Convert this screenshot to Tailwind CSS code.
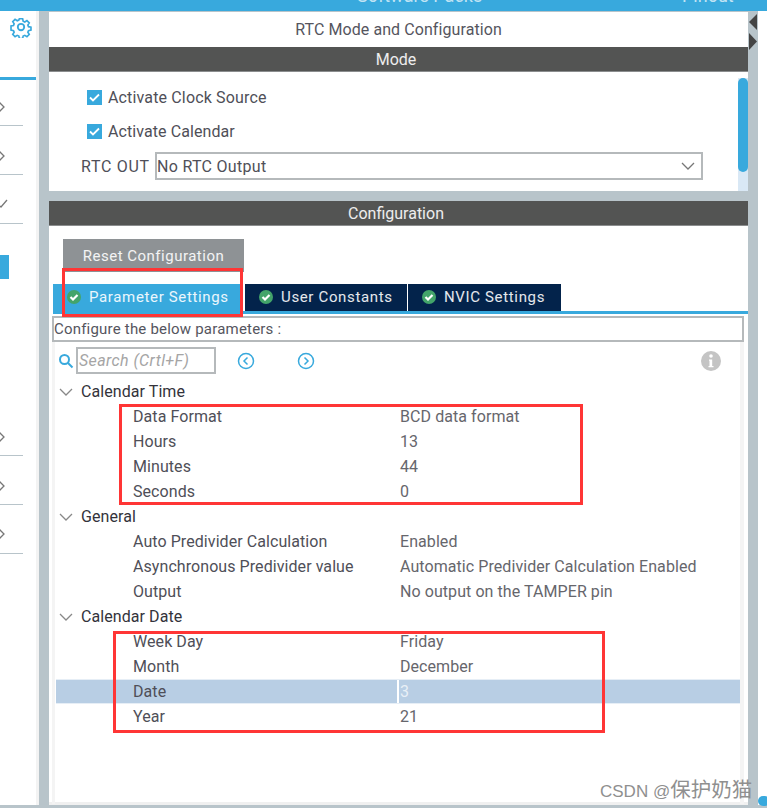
<!DOCTYPE html>
<html lang="en">
<head>
<meta charset="UTF-8" />
<title>RTC Mode and Configuration</title>
<script src="https://cdn.jsdelivr.net/npm/@tailwindcss/browser@4"></script>
</head>
<body class="bg-white">
<div class="relative w-[767px] h-[810px] overflow-hidden bg-white font-['Roboto','Liberation_Sans',sans-serif] text-[16px] leading-[25px] text-[#4f4f58]">

  <!-- top bar, labels cut off by the crop -->
  <div class="relative h-[11px] bg-[#38a9dd] overflow-hidden">
    <div class="flex text-white/70 text-[18px] leading-[18px] -mt-[13px] pl-[357px]">
      <span class="w-[325px]">Software Packs</span>
      <span>Pinout</span>
    </div>
  </div>

  <div class="flex h-[794px] border-b-[3px] border-[#b8c4ca] box-content">
    <!-- left sidebar -->
    <div class="w-[39px] h-[794px] border-r-[3px] border-[#f3f3f3] shrink-0">
      <div class="h-[69px] pt-[5px] flex justify-end pr-[4px] border-b-[3px] border-[#38a9dd]">
        <svg class="w-[22px] h-[22px]" viewBox="0 0 24 24" fill="none" stroke="#38a9dd" stroke-width="2">
          <circle cx="12" cy="12" r="3.5"/>
          <path d="M10 2h4l.6 3 2 .9 2.6-1.7 2.8 2.8-1.7 2.6.8 2 3 .6v3.6l-3 .6-.8 2 1.7 2.6-2.8 2.8-2.6-1.7-2 .9-.6 3h-4l-.6-3-2-.9-2.6 1.7-2.8-2.8 1.7-2.6-.8-2-3-.6V10.800l3-.6.8-2-1.700-2.600 2.800-2.800 2.600 1.700 2-.9z" transform="translate(1.200 1.200) scale(.9)"/>
        </svg>
      </div>
      <div class="w-[23px]">
        <div class="h-[46px] border-b border-[#b8c4ca] pt-[21px]"><svg class="w-[6px] h-[12px] -ml-[1px]" viewBox="0 0 6 12" fill="none" stroke="#777" stroke-width="1.300"><path d="M0 1l5 5-5 5"/></svg></div>
        <div class="h-[49px] border-b border-[#b8c4ca] pt-[24px]"><svg class="w-[6px] h-[12px] -ml-[1px]" viewBox="0 0 6 12" fill="none" stroke="#777" stroke-width="1.300"><path d="M0 1l5 5-5 5"/></svg></div>
        <div class="h-[49px] border-b border-[#b8c4ca] pt-[23px]"><svg class="w-[8px] h-[10px]" viewBox="0 0 8 10" fill="none" stroke="#777" stroke-width="1.300"><path d="M0 8l1 1 6-7"/></svg></div>
      </div>
      <div class="w-[9px] h-[24px] mt-[31px] bg-[#38a9dd]"></div>
      <div class="w-[23px] mt-[131px]">
        <div class="h-[46px] border-b border-[#b8c4ca] pt-[21px]"><svg class="w-[6px] h-[12px] -ml-[1px]" viewBox="0 0 6 12" fill="none" stroke="#777" stroke-width="1.300"><path d="M0 1l5 5-5 5"/></svg></div>
        <div class="h-[49px] border-b border-[#b8c4ca] pt-[24px]"><svg class="w-[6px] h-[12px] -ml-[1px]" viewBox="0 0 6 12" fill="none" stroke="#777" stroke-width="1.300"><path d="M0 1l5 5-5 5"/></svg></div>
        <div class="h-[49px] border-b border-[#b8c4ca] pt-[23px]"><svg class="w-[6px] h-[12px] -ml-[1px]" viewBox="0 0 6 12" fill="none" stroke="#777" stroke-width="1.300"><path d="M0 1l5 5-5 5"/></svg></div>
      </div>
    </div>

    <!-- splitter + panels -->
    <div class="w-[719px] bg-[#b8c4ca] pl-[10px] pr-[10px] pt-[1px] relative shrink-0">

      <!-- mode panel -->
      <div class="w-[699px] h-[179px] bg-white flex flex-col">
        <div class="h-[35px] text-center leading-[36px] tracking-[0.08px] text-[#55555e]">RTC Mode and Configuration</div>
        <div class="h-[25px] bg-[#535453] border-b border-[#8b8d8e] text-white/90 text-center leading-[25px] pr-[5px]">Mode</div>
        <div class="relative flex-1">
          <div class="absolute right-0 top-[6px] bottom-0 w-[10px] bg-[#d9e8f5]">
            <div class="h-[94px] bg-[#38a9dd] rounded-full"></div>
          </div>
          <label class="flex items-center h-[25px] mt-[13px] pl-[38px] gap-[6px] tracking-[0.15px]">
            <span class="w-[15px] h-[15px] bg-[#38a9dd] flex items-center justify-center"><svg class="w-[11px] h-[11px]" viewBox="0 0 11 11" fill="none" stroke="#fff" stroke-width="1.800"><path d="M1 5.500l3 3 6-6"/></svg></span>
            <span>Activate Clock Source</span>
          </label>
          <label class="flex items-center h-[25px] mt-[9px] pl-[38px] gap-[6px] tracking-[0.08px]">
            <span class="w-[15px] h-[15px] bg-[#38a9dd] flex items-center justify-center"><svg class="w-[11px] h-[11px]" viewBox="0 0 11 11" fill="none" stroke="#fff" stroke-width="1.800"><path d="M1 5.500l3 3 6-6"/></svg></span>
            <span>Activate Calendar</span>
          </label>
          <div class="flex items-center mt-[8px] pl-[32px]">
            <span class="w-[74px] tracking-[0.7px]">RTC OUT</span>
            <div class="w-[548px] h-[28px] border-2 border-[#b5b9bb] flex items-center justify-between pr-[6px]">
              <span class="tracking-[0.3px]">No RTC Output</span>
              <svg class="w-[14px] h-[8px]" viewBox="0 0 14 8" fill="none" stroke="#777" stroke-width="1.300"><path d="M1 1l6 6 6-6"/></svg>
            </div>
          </div>
        </div>
      </div>

      <!-- configuration panel -->
      <div class="w-[699px] h-[604px] mt-[10px] bg-white border-b-[3px] border-[#f0f0f0]">
        <div class="h-[25px] bg-[#535453] border-b border-[#8b8d8e] text-white/90 text-center leading-[25px] pr-[5px]">Configuration</div>
        <div class="ml-[14px] mt-[13px] w-[181px] h-[33px] bg-[#8e9295] text-white/90 text-center text-[15px] leading-[34px] tracking-[0.5px]">Reset Configuration</div>

        <!-- tabs -->
        <div class="flex mt-[12px] ml-[4px] h-[30px] items-start border-b-[3px] border-[#38a9dd] text-white/90 text-[15px] tracking-[0.65px]">
          <div class="w-[190px] h-[27px] bg-[#38a9dd] flex items-center pl-[14px] gap-[8px]">
            <svg class="w-[14px] h-[14px] -mt-[2px]" viewBox="0 0 14 14"><circle cx="7" cy="7" r="7" fill="#43a46a"/><path d="M3.500 7l2.500 2.500 4.500-4.600" fill="none" stroke="#fff" stroke-width="2.200"/></svg>
            <span>Parameter Settings</span>
          </div>
          <div class="w-[162px] h-[27px] ml-[2px] bg-[#03234b] flex items-center pl-[14px] gap-[8px]">
            <svg class="w-[14px] h-[14px] -mt-[2px]" viewBox="0 0 14 14"><circle cx="7" cy="7" r="7" fill="#43a46a"/><path d="M3.500 7l2.500 2.500 4.500-4.600" fill="none" stroke="#fff" stroke-width="2.200"/></svg>
            <span>User Constants</span>
          </div>
          <div class="w-[153px] h-[27px] ml-[1px] bg-[#03234b] flex items-center pl-[14px] gap-[8px]">
            <svg class="w-[14px] h-[14px] -mt-[2px]" viewBox="0 0 14 14"><circle cx="7" cy="7" r="7" fill="#43a46a"/><path d="M3.500 7l2.500 2.500 4.500-4.600" fill="none" stroke="#fff" stroke-width="2.200"/></svg>
            <span>NVIC Settings</span>
          </div>
        </div>

        <div class="ml-[3px] mr-[4px] mt-[2px] h-[26px] border-2 border-[#b5b9bb] text-[15px] leading-[22px] tracking-[0.2px] text-[#55555e]">Configure the below parameters :</div>

        <div class="ml-[3px] mr-[4px] border-l-[3px] border-[#f4f4f4] pr-[4px] h-[462px] border-r-[4px]">
          <!-- search row -->
          <div class="flex items-center h-[36px] pt-[1px]">
            <svg class="w-[16px] h-[16px] ml-[3px] shrink-0" viewBox="0 0 16 16" fill="none" stroke="#38a9dd" stroke-width="2"><circle cx="6.500" cy="6.500" r="4.500"/><path d="M10 10l4.500 4.500"/></svg>
            <div class="w-[140px] h-[27px] ml-[2px] shrink-0 border-2 border-[#b5b9bb] italic text-[#a5a5a5] leading-[23px] pl-[1px] tracking-[0.4px]">Search (Crtl+F)</div>
            <svg class="w-[18px] h-[18px] ml-[21px] shrink-0" viewBox="0 0 18 18" fill="none" stroke="#38a9dd" stroke-width="1.500"><circle cx="9" cy="9" r="7.500"/><path d="M10.500 5.500L7 9l3.500 3.500"/></svg>
            <svg class="w-[18px] h-[18px] ml-[42px] shrink-0" viewBox="0 0 18 18" fill="none" stroke="#38a9dd" stroke-width="1.500"><circle cx="9" cy="9" r="7.500"/><path d="M7.500 5.500L11 9l-3.500 3.500"/></svg>
            <svg class="w-[20px] h-[20px] ml-[386px] shrink-0" viewBox="0 0 20 20"><circle cx="10" cy="10" r="10" fill="#c4c4c4"/><circle cx="10" cy="5" r="1.800" fill="#fff"/><path d="M8 8.500h3.200V15H12.500v1.200h-5V15h1V9.700H8z" fill="#fff"/></svg>
          </div>

          <!-- parameter tree -->
          <div class="text-[16px] leading-[25px] mt-[1px] tracking-[0.07px]">
            <div class="flex items-center h-[25px] text-[#33333b]">
              <svg class="w-[14px] h-[8px] ml-[4px] mr-[8px]" viewBox="0 0 14 8" fill="none" stroke="#888" stroke-width="1.300"><path d="M1 1l6 6 6-6"/></svg>
              <span>Calendar Time</span>
            </div>
            <div class="flex h-[25px] pl-[78px]"><span class="w-[267px]">Data Format</span><span class="text-[#66666c]">BCD data format</span></div>
            <div class="flex h-[25px] pl-[78px]"><span class="w-[267px]">Hours</span><span class="text-[#66666c]">13</span></div>
            <div class="flex h-[25px] pl-[78px]"><span class="w-[267px]">Minutes</span><span class="text-[#66666c]">44</span></div>
            <div class="flex h-[25px] pl-[78px]"><span class="w-[267px]">Seconds</span><span class="text-[#66666c]">0</span></div>
            <div class="flex items-center h-[25px] text-[#33333b]">
              <svg class="w-[14px] h-[8px] ml-[4px] mr-[8px]" viewBox="0 0 14 8" fill="none" stroke="#888" stroke-width="1.300"><path d="M1 1l6 6 6-6"/></svg>
              <span>General</span>
            </div>
            <div class="flex h-[25px] pl-[78px]"><span class="w-[267px]">Auto Predivider Calculation</span><span class="text-[#66666c]">Enabled</span></div>
            <div class="flex h-[25px] pl-[78px]"><span class="w-[267px]">Asynchronous Predivider value</span><span class="text-[#66666c]">Automatic Predivider Calculation Enabled</span></div>
            <div class="flex h-[25px] pl-[78px]"><span class="w-[267px]">Output</span><span class="text-[#66666c]">No output on the TAMPER pin</span></div>
            <div class="flex items-center h-[25px] text-[#33333b]">
              <svg class="w-[14px] h-[8px] ml-[4px] mr-[8px]" viewBox="0 0 14 8" fill="none" stroke="#888" stroke-width="1.300"><path d="M1 1l6 6 6-6"/></svg>
              <span>Calendar Date</span>
            </div>
            <div class="flex h-[25px] pl-[78px]"><span class="w-[267px]">Week Day</span><span class="text-[#66666c]">Friday</span></div>
            <div class="flex h-[25px] pl-[78px]"><span class="w-[267px]">Month</span><span class="text-[#66666c]">December</span></div>
            <div class="flex h-[25px] pl-[77px] ml-[1px] -mr-[4px] bg-[#b8cee4] border-y border-[#e6eef6] leading-[23px]"><span class="w-[264px]">Date</span><span class="border-l-2 border-white text-white/70 pl-[1px]">3</span></div>
            <div class="flex h-[25px] pl-[78px]"><span class="w-[267px]">Year</span><span class="text-[#66666c]">21</span></div>
          </div>
        </div>
      </div>

      <!-- collapse arrows -->
      <svg class="absolute left-[710px] top-[3px] w-[8px] h-[36px]" viewBox="0 0 8 36" fill="#444"><path d="M8 0v16L0 8z"/><path d="M0 19v17l8-8.500z"/></svg>
    </div>
  </div>

  <!-- red annotation boxes pasted over the screenshot -->
  <div class="absolute left-[62px] top-[268px] w-[181px] h-[49px] border-[3px] border-[#ff3535]"></div>
  <div class="absolute left-[119px] top-[404px] w-[464px] h-[101px] border-[3px] border-[#ff3535]"></div>
  <div class="absolute left-[113px] top-[631px] w-[492px] h-[102px] border-[3px] border-[#ff3535]"></div>

  <!-- watermark -->
  <div class="absolute left-[600px] top-[778px] text-[17px] leading-[24px] whitespace-nowrap text-[#8f8f8f] font-['Liberation_Sans','Noto_Sans_CJK_SC',sans-serif]">CSDN @<span class="text-[20.500px]">保护奶猫</span></div>
  <div class="absolute left-[758px] top-[796px] w-[12px] h-[10px] rounded-full bg-[#38a9dd]"></div>
</div>
</body>
</html>
